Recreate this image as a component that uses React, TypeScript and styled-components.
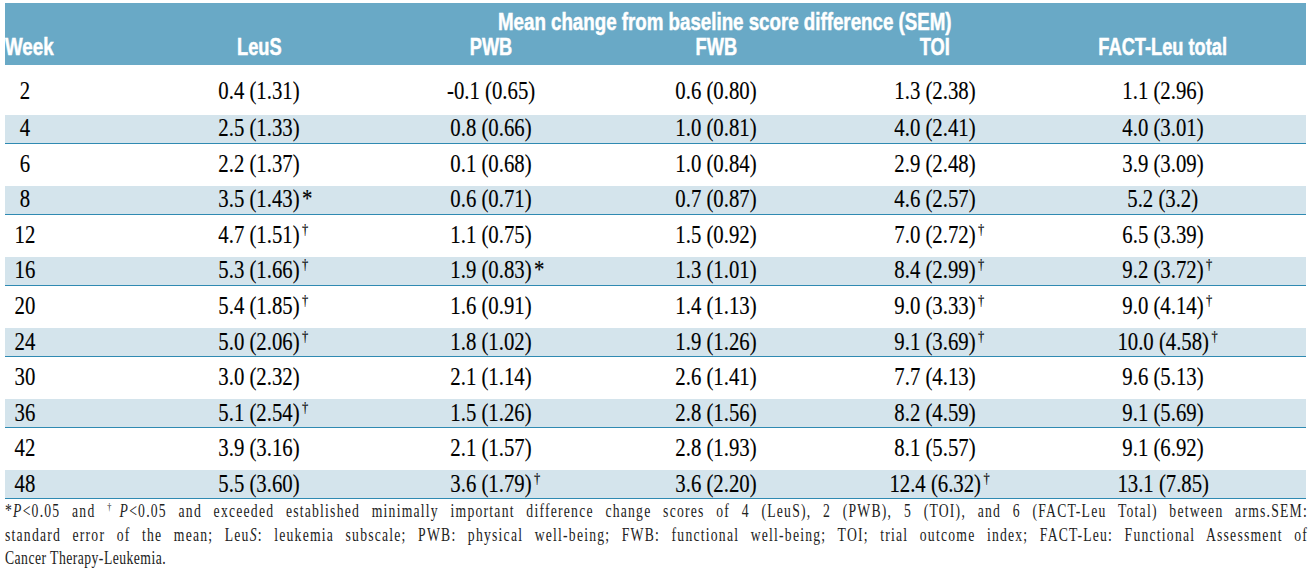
import React from 'react';
import styled, { createGlobalStyle } from 'styled-components';

const GlobalStyle = createGlobalStyle`
  html, body { margin: 0; padding: 0; background: #ffffff; }
  body { font-family: "Liberation Serif", "Times New Roman", serif; }
`;

const Page = styled.div`
  width: 1312px;
  height: 577px;
  box-sizing: border-box;
  padding: 3px 6px 0 5px;
  overflow: hidden;
`;

const Table = styled.table`
  width: 1301px;
  border-collapse: collapse;
  border-spacing: 0;
  table-layout: fixed;
`;

const HeadCell = styled.th<{ $align?: 'left' | 'center'; $top?: boolean; $last?: boolean }>`
  background: #69a9c6;
  color: #ffffff;
  font-family: "Liberation Sans", Arial, sans-serif;
  font-weight: 700;
  font-size: 24px;
  line-height: 22px;
  white-space: nowrap;
  text-align: ${(p) => p.$align ?? 'center'};
  padding: ${(p) => (p.$top ? '7.5px 0 1.5px' : '2px 0 6.5px')};
  padding-right: ${(p) => (p.$last ? '25px' : '0')};
  -webkit-text-stroke: 0.5px #ffffff;
`;

const Squeeze = styled.span<{ $sx: number; $origin?: string }>`
  display: inline-block;
  position: relative;
  transform: scaleX(${(p) => p.$sx});
  transform-origin: ${(p) => p.$origin ?? 'center'};
`;

const Row = styled.tr<{ $shade: boolean }>`
  background: ${(p) => (p.$shade ? '#d4e4ec' : '#ffffff')};
  border-bottom: ${(p) => (p.$shade ? '1px solid #2f8ab2' : '0')};
`;

const Cell = styled.td<{ $kind: 'first' | 'shade' | 'plain'; $week?: boolean; $last?: boolean }>`
  font-family: "Liberation Serif", "Times New Roman", serif;
  font-size: 25px;
  line-height: 24px;
  color: #000000;
  -webkit-text-stroke: 0.15px #000000;
  white-space: nowrap;
  text-align: ${(p) => (p.$week ? 'left' : 'center')};
  padding: ${(p) =>
    p.$kind === 'first' ? '14.5px 0 11.5px' : p.$kind === 'shade' ? '1.5px 0 2.5px' : '8px 0 10.2px'};
  padding-right: ${(p) => (p.$last ? '25px' : '0')};
`;

const WeekNum = styled.span`
  display: inline-block;
  width: 40px;
  text-align: center;
  transform: scaleX(0.83);
`;

const Mark = styled.span<{ $kind: 'dagger' | 'star' }>`
  position: absolute;
  left: 100%;
  top: ${(p) => (p.$kind === 'dagger' ? '-1px' : '0px')};
  margin-left: 3px;
  font-size: ${(p) => (p.$kind === 'dagger' ? '15px' : '25px')};
  line-height: ${(p) => (p.$kind === 'dagger' ? '14px' : '24px')};
`;

const Footnote = styled.div`
  width: ${1303 / 0.76}px;
  transform: scaleX(0.76);
  transform-origin: left top;
  margin-top: 1px;
  font-family: "Liberation Serif", "Times New Roman", serif;
  font-size: 18px;
  line-height: 23.5px;
  color: #222222;
`;

const FootLine = styled.div<{ $last?: boolean }>`
  text-align: ${(p) => (p.$last ? 'left' : 'justify')};
  text-align-last: ${(p) => (p.$last ? 'left' : 'justify')};
  letter-spacing: ${(p) => (p.$last ? '0.6px' : '1.6px')};
`;

const Sup = styled.sup`
  font-size: 11px;
  line-height: 0;
  vertical-align: 7px;
`;

type Val = { v: string; m?: 'dagger' | 'star' };

const rows: { week: string; vals: Val[] }[] = [
  { week: '2', vals: [{ v: '0.4 (1.31)' }, { v: '-0.1 (0.65)' }, { v: '0.6 (0.80)' }, { v: '1.3 (2.38)' }, { v: '1.1 (2.96)' }] },
  { week: '4', vals: [{ v: '2.5 (1.33)' }, { v: '0.8 (0.66)' }, { v: '1.0 (0.81)' }, { v: '4.0 (2.41)' }, { v: '4.0 (3.01)' }] },
  { week: '6', vals: [{ v: '2.2 (1.37)' }, { v: '0.1 (0.68)' }, { v: '1.0 (0.84)' }, { v: '2.9 (2.48)' }, { v: '3.9 (3.09)' }] },
  { week: '8', vals: [{ v: '3.5 (1.43)', m: 'star' }, { v: '0.6 (0.71)' }, { v: '0.7 (0.87)' }, { v: '4.6 (2.57)' }, { v: '5.2 (3.2)' }] },
  { week: '12', vals: [{ v: '4.7 (1.51)', m: 'dagger' }, { v: '1.1 (0.75)' }, { v: '1.5 (0.92)' }, { v: '7.0 (2.72)', m: 'dagger' }, { v: '6.5 (3.39)' }] },
  { week: '16', vals: [{ v: '5.3 (1.66)', m: 'dagger' }, { v: '1.9 (0.83)', m: 'star' }, { v: '1.3 (1.01)' }, { v: '8.4 (2.99)', m: 'dagger' }, { v: '9.2 (3.72)', m: 'dagger' }] },
  { week: '20', vals: [{ v: '5.4 (1.85)', m: 'dagger' }, { v: '1.6 (0.91)' }, { v: '1.4 (1.13)' }, { v: '9.0 (3.33)', m: 'dagger' }, { v: '9.0 (4.14)', m: 'dagger' }] },
  { week: '24', vals: [{ v: '5.0 (2.06)', m: 'dagger' }, { v: '1.8 (1.02)' }, { v: '1.9 (1.26)' }, { v: '9.1 (3.69)', m: 'dagger' }, { v: '10.0 (4.58)', m: 'dagger' }] },
  { week: '30', vals: [{ v: '3.0 (2.32)' }, { v: '2.1 (1.14)' }, { v: '2.6 (1.41)' }, { v: '7.7 (4.13)' }, { v: '9.6 (5.13)' }] },
  { week: '36', vals: [{ v: '5.1 (2.54)', m: 'dagger' }, { v: '1.5 (1.26)' }, { v: '2.8 (1.56)' }, { v: '8.2 (4.59)' }, { v: '9.1 (5.69)' }] },
  { week: '42', vals: [{ v: '3.9 (3.16)' }, { v: '2.1 (1.57)' }, { v: '2.8 (1.93)' }, { v: '8.1 (5.57)' }, { v: '9.1 (6.92)' }] },
  { week: '48', vals: [{ v: '5.5 (3.60)' }, { v: '3.6 (1.79)', m: 'dagger' }, { v: '3.6 (2.20)' }, { v: '12.4 (6.32)', m: 'dagger' }, { v: '13.1 (7.85)' }] },
];

const columns = ['LeuS', 'PWB', 'FWB', 'TOI', 'FACT-Leu total'];

export default function App() {
  return (
    <>
      <GlobalStyle />
      <Page>
        <Table>
          <colgroup>
            <col style={{ width: 138 }} />
            <col style={{ width: 232 }} />
            <col style={{ width: 232 }} />
            <col style={{ width: 218 }} />
            <col style={{ width: 220 }} />
            <col style={{ width: 261 }} />
          </colgroup>
          <thead>
            <tr>
              <HeadCell $top />
              <HeadCell $top colSpan={5}>
                <Squeeze $sx={0.78}>Mean change from baseline score difference (SEM)</Squeeze>
              </HeadCell>
            </tr>
            <tr>
              <HeadCell $align="left">
                <Squeeze $sx={0.78} $origin="left">Week</Squeeze>
              </HeadCell>
              {columns.map((c, i) => (
                <HeadCell key={c} $last={i === columns.length - 1}>
                  <Squeeze $sx={0.76}>{c}</Squeeze>
                </HeadCell>
              ))}
            </tr>
          </thead>
          <tbody>
            {rows.map((r, ri) => {
              const shade = ri % 2 === 1;
              const kind = ri === 0 ? 'first' : shade ? 'shade' : 'plain';
              return (
                <Row key={r.week} $shade={shade}>
                  <Cell $kind={kind} $week>
                    <WeekNum>{r.week}</WeekNum>
                  </Cell>
                  {r.vals.map((val, ci) => (
                    <Cell key={ci} $kind={kind} $last={ci === r.vals.length - 1}>
                      <Squeeze $sx={0.83}>
                        {val.v}
                        {val.m && <Mark $kind={val.m}>{val.m === 'dagger' ? '†' : '*'}</Mark>}
                      </Squeeze>
                    </Cell>
                  ))}
                </Row>
              );
            })}
          </tbody>
        </Table>
        <Footnote>
          <FootLine>
            *<i>P</i>&lt;0.05 and <Sup>†</Sup><i>P</i>&lt;0.05 and exceeded established minimally important difference change
            scores of 4 (LeuS), 2 (PWB), 5 (TOI), and 6 (FACT-Leu Total) between arms.SEM:
          </FootLine>
          <FootLine>
            standard error of the mean; Leu<i>S</i>: leukemia subscale; PWB: physical well-being; FWB: functional well-being;
            TOI; trial outcome index; FACT-Leu: Functional Assessment of
          </FootLine>
          <FootLine $last>Cancer Therapy-Leukemia.</FootLine>
        </Footnote>
      </Page>
    </>
  );
}
